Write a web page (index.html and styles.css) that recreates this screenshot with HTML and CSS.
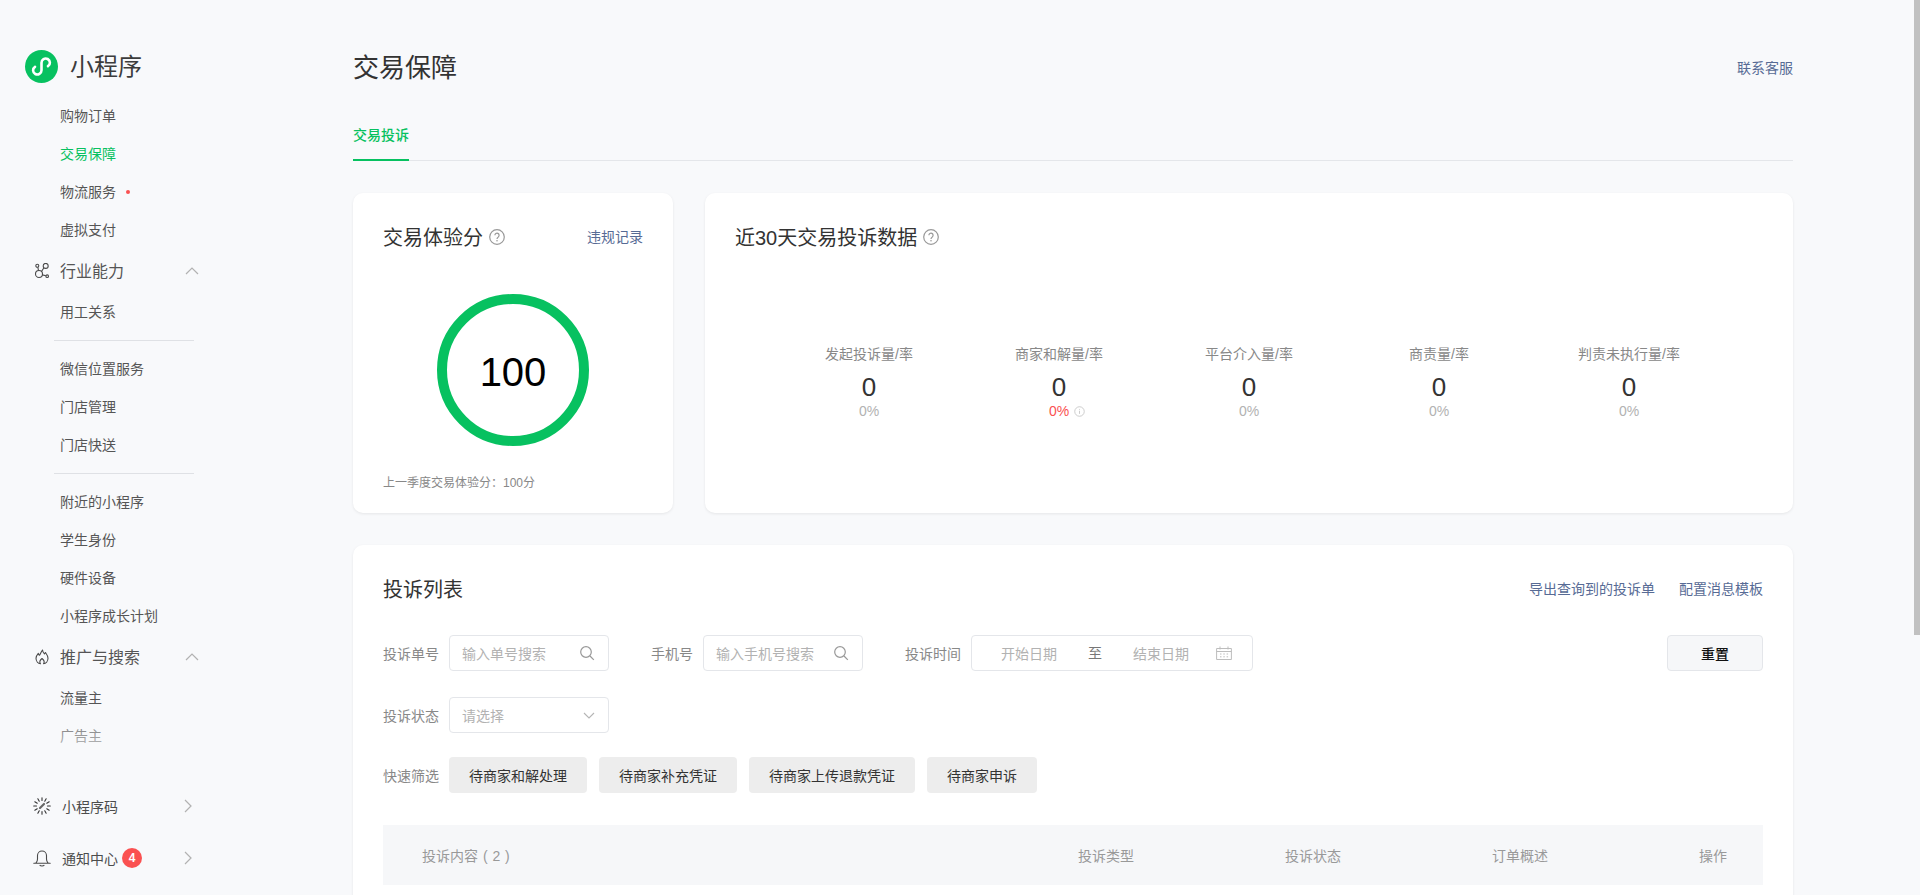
FILE: index.html
```html
<!DOCTYPE html>
<html lang="zh-CN">
<head>
<meta charset="utf-8">
<title>交易保障</title>
<link rel="stylesheet" href="styles.css">
</head>
<body>
<div class="app">
  <aside class="sidebar">
    <div class="brand">
      <svg class="brand-logo" viewBox="0 0 33 33" width="33" height="33"><circle cx="16.5" cy="16.5" r="16.5" fill="#07c160"/><path d="M10 16.8A4.200 4.200 0 1 0 16.500 20.300V12.700A4.200 4.200 0 1 1 23 16.200" fill="none" stroke="#fff" stroke-width="2.600" stroke-linecap="round"/></svg>
      <span class="brand-name">小程序</span>
    </div>
    <nav class="menu">
      <a class="menu-item">购物订单</a>
      <a class="menu-item active">交易保障</a>
      <a class="menu-item">物流服务<i class="dot"></i></a>
      <a class="menu-item">虚拟支付</a>
      <div class="menu-head">
        <svg class="menu-icon" viewBox="0 0 16 16" width="16" height="16"><g fill="none" stroke="#4a4a4a" stroke-width="1.100"><circle cx="3.300" cy="2.700" r="1.500"/><circle cx="11.700" cy="2.900" r="2.500"/><circle cx="5" cy="11" r="3.500"/><circle cx="13.200" cy="13.200" r="1.300"/><path d="M3.800 4.100 4.500 7.500M9.900 4.700 7.500 8.500M8.400 11.900l3.500.9"/></g></svg>
        <span>行业能力</span>
        <svg class="chev-up" viewBox="0 0 14 8" width="14" height="8"><path d="M1 7 7 1l6 6" fill="none" stroke="#b2b2b2" stroke-width="1.200"/></svg>
      </div>
      <a class="menu-item">用工关系</a>
      <hr class="menu-sep">
      <a class="menu-item">微信位置服务</a>
      <a class="menu-item">门店管理</a>
      <a class="menu-item">门店快送</a>
      <hr class="menu-sep">
      <a class="menu-item">附近的小程序</a>
      <a class="menu-item">学生身份</a>
      <a class="menu-item">硬件设备</a>
      <a class="menu-item">小程序成长计划</a>
      <div class="menu-head">
        <svg class="menu-icon" viewBox="0 0 16 16" width="16" height="16"><path d="M8.500 1c.3 2.400 1.200 3.100 2 3.800l1-1.300c1.400 2 2.500 3.700 2.500 5.800 0 3-2.200 5.200-4.500 5.500 1.200-1.600.6-3.600-1.500-5.300-2.100 1.700-2.700 3.700-1.500 5.300-2.300-.3-4.500-2.500-4.500-5.500 0-2.100 1-3.500 2.300-5 .2 1.100.6 1.700 1.200 2C6.300 5.200 7 2.900 8.500 1Z" fill="none" stroke="#4a4a4a" stroke-width="1.100" stroke-linejoin="round"/></svg>
        <span>推广与搜索</span>
        <svg class="chev-up" viewBox="0 0 14 8" width="14" height="8"><path d="M1 7 7 1l6 6" fill="none" stroke="#b2b2b2" stroke-width="1.200"/></svg>
      </div>
      <a class="menu-item">流量主</a>
      <a class="menu-item">广告主</a>
      <div class="menu-fade"></div>
    </nav>
    <div class="side-foot">
      <a class="foot-item">
        <svg class="foot-icon" viewBox="0 0 18 18" width="18" height="18"><g fill="none" stroke="#333" stroke-width="1.100" stroke-linecap="round"><path d="M14.500 9h2.800M13.760 6.250l2.430-1.400M11.750 4.240l1.400-2.430M9 3.500V.7M6.250 4.240l-1.400-2.430M4.240 6.250l-2.430-1.400M3.500 9H.7M4.240 11.750l-2.430 1.400M6.250 13.760l-1.400 2.430M9 14.500v2.800M11.750 13.760l1.400 2.430M13.760 11.750l2.430 1.400"/><path d="M7 11l4-4" stroke="#666" stroke-width="2.200"/></g></svg>
        <span>小程序码</span>
        <svg class="chev-right" viewBox="0 0 8 14" width="8" height="14"><path d="M1 1l6 6-6 6" fill="none" stroke="#b2b2b2" stroke-width="1.200"/></svg>
      </a>
      <a class="foot-item">
        <svg class="foot-icon" viewBox="0 0 18 18" width="18" height="18"><path d="M3 14c1-1 1.500-2.200 1.500-4V6.500a4.500 4.500 0 0 1 9 0V10c0 1.800.5 3 1.500 4M.8 14.200h16.400M7 16.400c.6.800 3.400.800 4 0" fill="none" stroke="#4a4a4a" stroke-width="1.100" stroke-linecap="round"/></svg>
        <span>通知中心</span>
        <b class="badge">4</b>
        <svg class="chev-right" viewBox="0 0 8 14" width="8" height="14"><path d="M1 1l6 6-6 6" fill="none" stroke="#b2b2b2" stroke-width="1.200"/></svg>
      </a>
    </div>
  </aside>

  <main class="main">
    <div class="content">
      <header class="page-head">
        <h1 class="page-title">交易保障</h1>
        <a class="link page-link">联系客服</a>
      </header>
      <div class="tabs"><a class="tab">交易投诉</a></div>

      <section class="overview">
        <div class="card score-card">
          <div class="card-head">
            <h2 class="card-title">交易体验分</h2>
            <svg class="help" viewBox="0 0 16 16" width="16" height="16"><circle cx="8" cy="8" r="7.300" fill="none" stroke="#999" stroke-width="1.200"/><path d="M5.900 6.300a2.100 2.100 0 1 1 3.400 1.600c-.8.600-1.300 1-1.300 2" fill="none" stroke="#999" stroke-width="1.200"/><circle cx="8" cy="11.800" r=".8" fill="#999"/></svg>
            <a class="link head-link">违规记录</a>
          </div>
          <div class="ring"><span class="ring-value">100</span></div>
          <p class="score-note">上一季度交易体验分：100分</p>
        </div>
        <div class="card data-card">
          <div class="card-head">
            <h2 class="card-title">近30天交易投诉数据</h2>
            <svg class="help" viewBox="0 0 16 16" width="16" height="16"><circle cx="8" cy="8" r="7.300" fill="none" stroke="#999" stroke-width="1.200"/><path d="M5.900 6.300a2.100 2.100 0 1 1 3.400 1.600c-.8.600-1.300 1-1.300 2" fill="none" stroke="#999" stroke-width="1.200"/><circle cx="8" cy="11.800" r=".8" fill="#999"/></svg>
          </div>
          <div class="stats">
            <div class="stat"><div class="stat-label">发起投诉量/率</div><div class="stat-num">0</div><div class="stat-rate">0%</div></div>
            <div class="stat"><div class="stat-label">商家和解量/率</div><div class="stat-num">0</div><div class="stat-rate warn">0%<svg class="info" viewBox="0 0 12 12" width="11" height="11"><circle cx="6" cy="6" r="5.200" fill="none" stroke="#c8c8c8"/><path d="M6 3.200v.9M6 5.200v3.400" stroke="#c8c8c8"/></svg></div></div>
            <div class="stat"><div class="stat-label">平台介入量/率</div><div class="stat-num">0</div><div class="stat-rate">0%</div></div>
            <div class="stat"><div class="stat-label">商责量/率</div><div class="stat-num">0</div><div class="stat-rate">0%</div></div>
            <div class="stat"><div class="stat-label">判责未执行量/率</div><div class="stat-num">0</div><div class="stat-rate">0%</div></div>
          </div>
        </div>
      </section>

      <section class="card list-card">
        <div class="list-head">
          <h2 class="card-title">投诉列表</h2>
          <div class="list-links"><a class="link">导出查询到的投诉单</a><a class="link">配置消息模板</a></div>
        </div>
        <div class="filter-row">
          <label class="f-label">投诉单号</label>
          <div class="field"><span class="ph">输入单号搜索</span><svg class="search" viewBox="0 0 16 16" width="16" height="16"><circle cx="7" cy="7" r="5.300" fill="none" stroke="#999" stroke-width="1.200"/><path d="m11 11 3.800 3.800" stroke="#999" stroke-width="1.200"/></svg></div>
          <label class="f-label f-next">手机号</label>
          <div class="field"><span class="ph">输入手机号搜索</span><svg class="search" viewBox="0 0 16 16" width="16" height="16"><circle cx="7" cy="7" r="5.300" fill="none" stroke="#999" stroke-width="1.200"/><path d="m11 11 3.800 3.800" stroke="#999" stroke-width="1.200"/></svg></div>
          <label class="f-label f-next">投诉时间</label>
          <div class="field date-field">
            <span class="ph">开始日期</span><span class="to">至</span><span class="ph">结束日期</span>
            <svg class="cal" viewBox="0 0 16 14" width="16" height="14"><path d="M.6 2.500h14.800v11H.6ZM.6 5.500h14.800M4 .5v3M12 .5v3" fill="none" stroke="#bdbdbd"/><path d="M4 8h1.500M7.300 8h1.500M10.600 8h1.500M4 10.800h1.500M7.300 10.800h1.500M10.600 10.800h1.500" stroke="#bdbdbd"/></svg>
          </div>
          <button class="reset">重置</button>
        </div>
        <div class="filter-row">
          <label class="f-label">投诉状态</label>
          <div class="field"><span class="ph">请选择</span><svg class="select-arrow" viewBox="0 0 12 7" width="12" height="7"><path d="m1 1 5 5 5-5" fill="none" stroke="#b5b5b5" stroke-width="1.100"/></svg></div>
        </div>
        <div class="filter-row quick">
          <label class="f-label">快速筛选</label>
          <button class="chip">待商家和解处理</button>
          <button class="chip">待商家补充凭证</button>
          <button class="chip">待商家上传退款凭证</button>
          <button class="chip">待商家申诉</button>
        </div>
        <div class="table-head">
          <span class="th-first">投诉内容 ( 2 )</span>
          <span>投诉类型</span>
          <span>投诉状态</span>
          <span>订单概述</span>
          <span>操作</span>
        </div>
        <div class="table-body"></div>
      </section>
    </div>
  </main>
  <div class="scroll-thumb"></div>
</div>
</body>
</html>
```

FILE: styles.css
```css
* { box-sizing: border-box; }
html, body { margin: 0; height: 100%; overflow: hidden; }
body {
  background: #f8f9fb;
  color: #333;
  font-family: "Liberation Sans", "Noto Sans CJK SC", sans-serif;
  font-size: 14px;
}
a { color: inherit; text-decoration: none; }
h1, h2, p { margin: 0; font-weight: 400; }

.app { position: relative; display: flex; height: 895px; }
.scroll-thumb { position: absolute; top: 0; right: 0; width: 6px; height: 635px; background: #c1c1c1; }

/* Sidebar */
.sidebar { flex: none; width: 240px; height: 895px; display: flex; flex-direction: column; }
.brand { flex: none; display: flex; align-items: flex-end; height: 97px; padding: 0 0 14px 25px; gap: 12px; }
.brand-logo { display: block; }
.brand-name { font-size: 24px; line-height: 33px; color: #3c3c3c; }
.menu { flex: 1; position: relative; overflow: hidden; }
.menu-item { display: flex; align-items: center; height: 38px; padding-left: 60px; color: #555; line-height: 38px; }
.menu-item.active { color: #07c160; }
.dot { width: 4px; height: 4px; border-radius: 50%; background: #fa5151; margin-left: 10px; }
.menu-head { display: flex; align-items: center; height: 44px; padding-left: 34px; font-size: 16px; color: #555; }
.menu-head span { margin-bottom: 2px; }
.menu-icon { margin-right: 10px; }
.chev-up { margin-left: auto; margin-right: 41px; }
.menu-sep { border: 0; height: 1px; background: #dfe1e5; margin: 9px 46px 9px 54px; }
.menu-fade { position: absolute; left: 0; right: 0; bottom: 0; height: 70px; background: linear-gradient(rgba(248,249,251,0), #f8f9fb 85%); }
.side-foot { flex: none; padding-bottom: 11px; }
.foot-item { display: flex; align-items: center; height: 52px; padding-left: 33px; color: #4c4c4c; }
.foot-icon { margin-right: 11px; }
.badge { width: 20px; height: 20px; line-height: 20px; margin-left: 4px; border-radius: 50%; background: #fa5151; color: #fff; font-size: 12px; text-align: center; }
.chev-right { margin-left: auto; margin-right: 48px; }

/* Main */
.main { flex: 1; min-width: 0; height: 895px; overflow: hidden; padding-left: 113px; }
.content { width: 1440px; padding-bottom: 32px; }
.page-head { display: flex; align-items: center; justify-content: space-between; padding-top: 48px; height: 88px; }
.page-title { font-size: 26px; line-height: 40px; color: #333; }
.page-link { margin-bottom: 2px; }
.link { color: #576b95; font-size: 14px; }
.tabs { display: flex; margin-top: 26px; height: 47px; border-bottom: 1px solid #e4e6ea; }
.tab { height: 47px; line-height: 42px; font-weight: 500; color: #07c160; border-bottom: 2px solid #07c160; }

.card { background: #fff; border-radius: 10px; box-shadow: 0 1px 3px rgba(0,0,0,.08); }
.overview { display: flex; gap: 32px; margin-top: 32px; }
.card-head { display: flex; align-items: center; gap: 6px; height: 28px; }
.card-title { font-size: 20px; line-height: 28px; color: #333; padding-top: 2px; }
.help { flex: none; }
.head-link { margin-left: auto; margin-bottom: 2px; }

.score-card { flex: none; width: 320px; height: 320px; padding: 30px 30px 0; display: flex; flex-direction: column; }
.ring { flex: none; width: 152px; height: 152px; margin: 43px auto 0 auto; border: 10px solid #07c160; border-radius: 50%; display: flex; align-items: center; justify-content: center; }
.ring-value { font-size: 40px; line-height: 46px; color: #000; padding-top: 4px; }
.score-note { margin-top: 28px; font-size: 12px; line-height: 18px; color: #888; }

.data-card { flex: 1; height: 320px; padding: 30px; }
.stats { display: flex; justify-content: center; margin-top: 92px; }
.stat { width: 190px; text-align: center; }
.stat-label { line-height: 22px; color: #888; }
.stat-num { font-size: 26px; line-height: 30px; margin-top: 7px; color: #333; }
.stat-rate { position: relative; line-height: 18px; color: #b2b2b2; }
.stat-rate.warn { color: #fa5151; }
.info { position: absolute; margin: 4px 0 0 5px; }

.list-card { margin-top: 32px; padding: 30px 30px 40px 30px; }
.list-head { display: flex; align-items: center; justify-content: space-between; height: 28px; }
.list-links { display: flex; gap: 24px; margin-bottom: 2px; }
.filter-row { display: flex; align-items: center; height: 36px; margin-top: 26px; }
.list-head + .filter-row { margin-top: 32px; }
.f-label { color: #888; margin-right: 10px; white-space: nowrap; }
.f-next { margin-left: 42px; }
.field { display: flex; align-items: center; justify-content: space-between; flex: none; width: 160px; height: 36px; padding: 0 13px 0 12px; background: #fff; border: 1px solid #e4e6ea; border-radius: 4px; }
.ph { color: #b2b2b2; white-space: nowrap; }
.date-field { width: 282px; padding: 0 20px 0 29px; justify-content: flex-start; }
.to { color: #777; margin: 0 31px 3px; }
.cal { flex: none; margin-left: auto; }
.reset { margin-left: auto; width: 96px; height: 36px; padding: 0; background: #f6f7f9; border: 1px solid #e4e6ea; border-radius: 4px; font: 500 14px "Liberation Sans", "Noto Sans CJK SC", sans-serif; color: #111; }
.quick { margin-top: 24px; }
.chip { height: 36px; padding: 0 20px; margin-right: 12px; background: #ededed; border: 0; border-radius: 4px; font: 400 14px "Liberation Sans", "Noto Sans CJK SC", sans-serif; color: #333; white-space: nowrap; }
.table-head { display: grid; grid-template-columns: 695px 207px 207px 207px 1fr; align-items: center; height: 60px; margin-top: 32px; background: #f6f7f9; color: #999; }
.th-first { padding-left: 39px; word-spacing: 1px; }
.table-body { height: 304px; }
```
